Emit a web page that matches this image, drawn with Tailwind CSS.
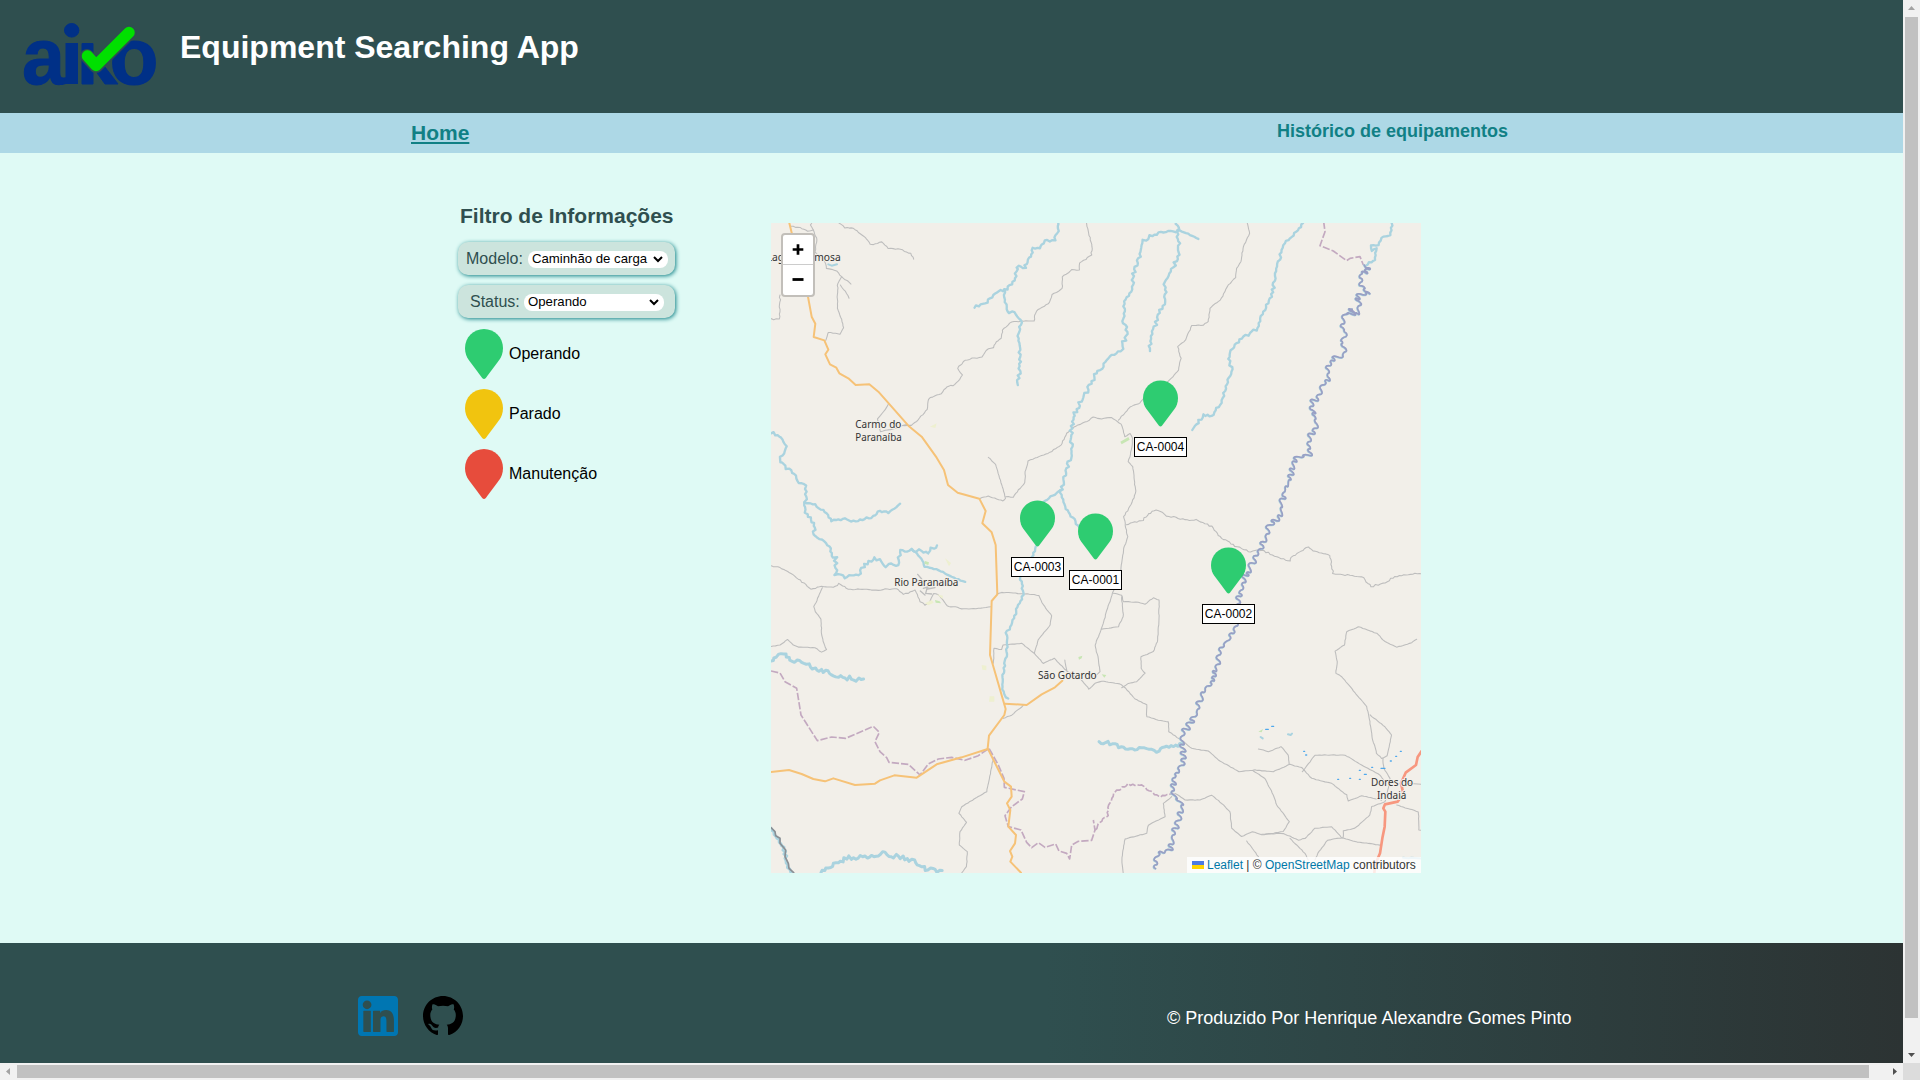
<!DOCTYPE html>
<html lang="pt-BR">
<head>
<meta charset="utf-8">
<title>Equipment Searching App</title>
<script src="https://cdn.jsdelivr.net/npm/@tailwindcss/browser@4"></script>
</head>
<body class="h-[1080px] w-[1920px] overflow-hidden bg-[#f1f1f1] font-['Liberation_Sans',Arial,sans-serif] text-base">
<svg width="0" height="0" class="absolute">
  <symbol id="pin" viewBox="0 0 38 50"><path d="M19 0C8.500 0 0 8.500 0 19c0 5 1.600 8.800 3.600 11.800L17.200 49q1.800 2 3.600 0L34.400 30.800C36.400 27.800 38 24 38 19 38 8.500 29.500 0 19 0z" fill="currentColor"/></symbol>
</svg>
<div class="grid h-full grid-cols-[1903px_17px] grid-rows-[1063px_17px]">
  <div class="flex flex-col overflow-hidden bg-[#dffaf5]">
    <header class="flex h-[113px] shrink-0 items-start bg-[#2f4f4f]">
      <svg class="h-[113px] w-[180px] shrink-0" viewBox="0 0 180 113" font-family="Liberation Sans, Arial, sans-serif" font-weight="bold" font-size="79">
        <g fill="#003087" stroke="#003087" stroke-width="1">
          <text x="22" y="84" textLength="43" lengthAdjust="spacingAndGlyphs">a</text>
          <rect x="66" y="43.500" width="11.500" height="40"/>
          <ellipse cx="71.700" cy="30.300" rx="7.200" ry="6.800"/>
          <path d="M82 43.500H93V84H82zM89 66L98 58 118 84H105L95 70z"/>
          <text x="109.500" y="84" textLength="49" lengthAdjust="spacingAndGlyphs">o</text>
        </g>
        <path d="M87 56L96 66 130 32" fill="none" stroke="#2f4f4f" stroke-width="14" stroke-linecap="round" stroke-linejoin="round"/>
        <path d="M87.500 56L96 65.500 129 32.500" fill="none" stroke="#00e000" stroke-width="11.500" stroke-linecap="round" stroke-linejoin="round"/>
      </svg>
      <h1 class="mt-[29px] text-[32px] leading-[37px] font-bold whitespace-nowrap text-white">Equipment Searching App</h1>
    </header>
    <nav class="flex h-10 shrink-0 bg-[#add8e6] font-bold text-[#118085]">
      <a class="w-[866px] pt-2 pl-[411px] text-[21px] leading-6 underline decoration-2 underline-offset-2">Home</a>
      <a class="pt-2 pl-[411px] text-[18px] leading-5">Histórico de equipamentos</a>
    </nav>
    <main class="flex h-[790px] shrink-0 pl-[458px]">
      <aside class="w-[313px] pt-[51px]">
        <h2 class="pl-0.5 text-[21px] leading-6 font-bold whitespace-nowrap text-[#2f4f4f]">Filtro de Informações</h2>
        <div class="mt-[14px] flex h-[33px] w-[217px] items-center rounded-[10px] bg-[#cce4dd] pl-2 text-[#2f4f4f] shadow-[1px_1px_4px_#118085]">
          <span class="w-[62px] leading-[18px] pt-px">Modelo:</span>
          <span class="mt-px flex h-[17px] w-[140px] items-center justify-between rounded-lg bg-white pr-[5px] pl-1 text-[13.2px] leading-4 text-black">Caminhão de carga<svg width="10" height="7" viewBox="0 0 10 7" fill="none" stroke="#000" stroke-width="2"><path d="M1 1l4 4 4-4"/></svg></span>
        </div>
        <div class="mt-[10px] flex h-[33px] w-[217px] items-center rounded-[10px] bg-[#cce4dd] pl-3 text-[#2f4f4f] shadow-[1px_1px_4px_#118085]">
          <span class="w-[54px] leading-[18px] pt-px">Status:</span>
          <span class="mt-px flex h-[17px] w-[140px] items-center justify-between rounded-lg bg-white pr-[5px] pl-1 text-[13.2px] leading-4 text-black">Operando<svg width="10" height="7" viewBox="0 0 10 7" fill="none" stroke="#000" stroke-width="2"><path d="M1 1l4 4 4-4"/></svg></span>
        </div>
        <ul class="mt-[11px] flex flex-col gap-2.5 pl-[7px]">
          <li class="flex h-[50px] items-center gap-[6px]"><svg class="h-[50px] w-[38px] text-[#2ecc71]"><use href="#pin"/></svg>Operando</li>
          <li class="flex h-[50px] items-center gap-[6px]"><svg class="h-[50px] w-[38px] text-[#f1c40f]"><use href="#pin"/></svg>Parado</li>
          <li class="flex h-[50px] items-center gap-[6px]"><svg class="h-[50px] w-[38px] text-[#e74c3c]"><use href="#pin"/></svg>Manutenção</li>
        </ul>
      </aside>
      <section class="relative mt-[70px] h-[650px] w-[650px] overflow-hidden bg-[#f2efe9]">
        <svg id="map" class="absolute inset-0" width="650" height="650" viewBox="18 24 1950 1950" fill="none" stroke-linejoin="round" stroke-linecap="round">
          <g id="lines"></g>
          <g fill="#c8e6b4">
            <path d="M480 1038l12 4-2 8-12-4zM510 1155l14 4 4 6-16-2zM940 1326l12-4-2 8-8 4zM1066 680l24-14 4 8-24 14zM1010 1378l14 2-6 8zM1480 1550l14-8-4 10z"/>
            <path fill="#eef0d0" d="M495 635l20-10-4 14zM540 1030l18 14-6 10zM650 1350l14 2v14l-12-2zM674 1444h14v16h-16zM480 1165l20-10 6 8-16 8zM516 1138l18 4-2 10z"/>
          </g>
          <path stroke="#bdbdbd" stroke-width="4" d="M458 1078l12 14M475 1120l20-6M490 1105l-8 30 18 2M466 1128l14 12M488 1122l22-4"/>
          <path stroke="#4fa8ec" stroke-width="4" d="M1502 1543h8M1520 1534h6M1616 1609h3M1622 1620h3M1718 1693h3M1754 1690h3M1783 1666h3M1783 1693h3M1798 1678h6M1820 1657h3M1848 1660h12M1876 1638h3M1892 1624h3M1906 1609h3"/>
          <path stroke="#aad3df" stroke-width="6" d="M1487 1566l6 4M1569 1558l8 2 4-4M190 148l10 4 16-4M1914 1928l16 2 10-2 30 3"/>
          <g fill="#333" stroke="#f2efe9" stroke-width="6" paint-order="stroke" font-family="Noto Sans, Open Sans, sans-serif" font-size="30">
            <text x="5" y="138" textLength="222" lengthAdjust="spacingAndGlyphs">Lagoa Formosa</text>
            <text x="271" y="640" textLength="138" lengthAdjust="spacingAndGlyphs">Carmo do</text>
            <text x="271" y="678" textLength="139" lengthAdjust="spacingAndGlyphs">Paranaíba</text>
            <text x="388" y="1114" textLength="192" lengthAdjust="spacingAndGlyphs">Rio Paranaíba</text>
            <text x="819" y="1392" textLength="176" lengthAdjust="spacingAndGlyphs">São Gotardo</text>
            <text x="1818" y="1713" textLength="126" lengthAdjust="spacingAndGlyphs">Dores do</text>
            <text x="1836" y="1751" textLength="88" lengthAdjust="spacingAndGlyphs">Indaiá</text>
          </g>
        </svg>
        <div class="absolute top-[10px] left-[10px] flex h-16 w-[34px] flex-col rounded border-2 border-[#c2bfba] bg-white">
          <svg class="h-[30px] w-[30px] border-b border-[#ccc]" viewBox="0 0 30 30"><path d="M9.500 15h11M15 9.500v11" stroke="#000" stroke-width="2.800"/></svg>
          <svg class="h-[30px] w-[30px]" viewBox="0 0 30 30"><path d="M9.500 14.500h11" stroke="#000" stroke-width="2.800"/></svg>
        </div>
        <div class="absolute top-[157px] left-[363px] flex w-[53px] flex-col items-center"><svg class="h-[47px] w-[35px] text-[#2ecc71]"><use href="#pin"/></svg><span class="mt-[10px] h-5 w-[53px] border border-black bg-white text-center text-xs leading-[18px] whitespace-nowrap">CA-0004</span></div>
        <div class="absolute top-[277px] left-[240px] flex w-[53px] flex-col items-center"><svg class="h-[47px] w-[35px] text-[#2ecc71]"><use href="#pin"/></svg><span class="mt-[10px] h-5 w-[53px] border border-black bg-white text-center text-xs leading-[18px] whitespace-nowrap">CA-0003</span></div>
        <div class="absolute top-[290px] left-[298px] flex w-[53px] flex-col items-center"><svg class="h-[47px] w-[35px] text-[#2ecc71]"><use href="#pin"/></svg><span class="mt-[10px] h-5 w-[53px] border border-black bg-white text-center text-xs leading-[18px] whitespace-nowrap">CA-0001</span></div>
        <div class="absolute top-[324px] left-[431px] flex w-[53px] flex-col items-center"><svg class="h-[47px] w-[35px] text-[#2ecc71]"><use href="#pin"/></svg><span class="mt-[10px] h-5 w-[53px] border border-black bg-white text-center text-xs leading-[18px] whitespace-nowrap">CA-0002</span></div>
        <div class="absolute right-0 bottom-0 flex h-4 w-[234px] items-center bg-white/80 pl-[5px] text-xs whitespace-pre text-[#333]"><svg class="mr-[3px] h-2 w-3" viewBox="0 0 12 8"><path fill="#4c7be1" d="M0 0h12v4H0z"/><path fill="#ffd500" d="M0 4h12v4H0z"/></svg><span class="text-[#0078a8]">Leaflet</span> | © <span class="text-[#0078a8]">OpenStreetMap</span> contributors</div>
      </section>
    </main>
    <footer class="flex h-[120px] shrink-0 items-start bg-[linear-gradient(to_right,#2f4f4f_55%,#2c3333_100%)] pt-[53px] pl-[358px]">
      <svg class="size-10" viewBox="0 0 128 128"><path fill="#0076b2" d="M116 0H12C5 0 0 5 0 12v104c0 7 5 12 12 12h104c7 0 12-5 12-12V12c0-7-5-12-12-12zM41 114q0 1-1 1H19q-2 0-2-2V49q0-2 2-2h21q1 0 1 2zM29 42a14 14 0 1 1 0-28 14 14 0 0 1 0 28zM115 113q0 2-2 2H93q-2 0-2-2V83c0-5 1-18-9-18-9 0-10 8-10 13v35q0 2-1 2H50q-2 0-2-2V49q0-2 2-2h20q1 0 1 2v5c4-6 10-9 19-9 22 0 25 20 25 35z"/></svg>
      <svg class="ml-[25px] size-10" viewBox="0 0 16 16"><path d="M8 0C3.580 0 0 3.580 0 8c0 3.540 2.290 6.530 5.470 7.590.4.070.55-.17.55-.38 0-.19-.01-.82-.01-1.490-2.010.37-2.530-.49-2.690-.94-.09-.23-.48-.94-.82-1.130-.28-.15-.68-.52-.01-.53.63-.01 1.080.58 1.230.82.72 1.210 1.870.87 2.330.66.07-.52.28-.87.51-1.070-1.780-.2-3.640-.89-3.640-3.950 0-.87.31-1.590.82-2.150-.08-.2-.36-1.020.08-2.120 0 0 .67-.21 2.200.82.64-.18 1.320-.27 2-.27s1.360.09 2 .27c1.530-1.040 2.200-.82 2.200-.82.44 1.100.16 1.920.08 2.120.51.56.82 1.270.82 2.150 0 3.070-1.870 3.750-3.650 3.950.29.25.54.73.54 1.480 0 1.070-.01 1.930-.01 2.200 0 .21.15.46.55.38A8.010 8.010 0 0 0 16 8c0-4.420-3.580-8-8-8z"/></svg>
      <p class="mt-[12px] ml-[704px] text-[18px] leading-5 whitespace-nowrap text-white">© Produzido Por Henrique Alexandre Gomes Pinto</p>
    </footer>
  </div>
  <div class="flex flex-col items-center bg-[#f1f1f1]">
    <svg class="size-[17px]" viewBox="0 0 17 17"><path fill="#a3a3a3" d="M5 10h7L8.500 6z"/></svg>
    <div class="h-[1001px] w-[13px] bg-[#c1c1c1]"></div>
    <svg class="mt-auto size-[17px]" viewBox="0 0 17 17"><path fill="#505050" d="M5 7h7l-3.500 4z"/></svg>
  </div>
  <div class="flex items-center bg-[#f1f1f1]">
    <svg class="size-[17px]" viewBox="0 0 17 17"><path fill="#a3a3a3" d="M10 5v7L6 8.500z"/></svg>
    <div class="h-[13px] w-[1852px] bg-[#c1c1c1]"></div>
    <svg class="ml-auto size-[17px]" viewBox="0 0 17 17"><path fill="#505050" d="M7 5v7l4-3.500z"/></svg>
  </div>
  <div class="bg-[#dcdcdc]"></div>
</div>
<script>
// Map features: [kind, x offset, y offset, roughness, points]
const styles = {
  road: ['#bdbdbd', 3.2], river: ['#aad3df', 7], stream: ['#aad3df', 9], main: ['#f6c277', 6], trunk: ['#f7977f', 8],
  border: ['#c3a9c0', 5, '22 6'], big: ['#999fc4', 5]
};
const X = 990, Y = 990;
const features = [
  ['road',0,0,1.5,'78,34 105,38 128,48 145,45 136,30 142,20'],
  ['road',0,0,1.5,'145,45 156,75 150,110 180,140 185,160 215,168 230,185 258,207'],
  ['road',0,0,1.5,'230,185 218,205 217,280 232,320 236,338 225,358 190,352 182,376'],
  ['road',0,0,1,'226,210 245,235 252,250'],
  ['road',0,0,1.5,'222,24 240,38 265,40 302,67 315,88 325,90 350,80 370,100 406,103 437,116 447,132'],
  ['road',0,0,2,'964,20 970,55 981,88 979,120 945,145 943,165 920,165 892,186 892,220 862,240 855,262 820,284 808,300 808,318 790,318 768,318 740,320 712,345 710,370 690,385 686,398 663,405 650,425 600,435 578,460 592,480 570,510 545,515 528,535 490,552 485,583 460,615 440,632 412,631'],
  ['road',0,0,1,'370,568 360,585 338,612 347,650 390,640 425,628'],
  ['road',0,0,1,'670,727 692,748 700,775 722,850 714,858 670,843 645,850'],
  ['road',0,0,1.5,'722,845 745,846 765,820 780,803 780,770 790,738 830,722 855,712 888,690 905,655 925,636 960,622 985,607 1010,611 1040,608 1068,628 1080,665 1095,655 1103,670 1103,690 1090,740 1103,755 1112,835 1095,875 1076,905 1088,965 1077,1000 1070,1050 1060,1100 1040,1140 1010,1240 990,1290 1000,1330 1004,1370 985,1390'],
  ['road',X,0,1.5,'457,24 463,55 445,95 437,140 425,160 422,188 400,210 380,250 345,280 340,320 325,330 290,332 272,375 248,395 258,430 250,465 220,500 150,545 135,565 105,576 70,615'],
  ['road',X,0,3,'94,929 145,915 160,895 190,885 215,902 270,915 310,915 350,935 380,970 420,992 460,1010 500,1006 585,1040 590,1028 640,995 660,1010 705,1020 715,1075 800,1085 828,1115 870,1102 900,1085 980,1075'],
  ['road',0,0,3,'45,240 42,312 18,313'],
  ['road',0,Y,2,'18,62 45,68 68,80 100,102 138,132 170,125 205,128 222,116 250,132 340,135 395,130 415,148 430,145 450,135 465,170 480,180 492,172 505,145 520,148 545,183 590,190 640,191 678,185'],
  ['road',0,Y,1,'172,128 147,185 150,200 168,222 170,270 176,295 184,314 170,322 150,308 100,306 85,300 67,284 45,300 18,304'],
  ['road',0,Y,1,'695,148 710,142 800,148 822,152 835,180 860,212 855,240 820,285 808,325 835,355 868,340 905,378 900,345'],
  ['road',0,Y,1,'685,355 687,310 710,314 714,300 770,295 808,325'],
  ['road',0,Y,1,'905,378 945,400 972,432 990,415 1010,408 1064,416 1082,430 1110,462 1145,480 1145,515 1180,525 1210,530 1212,560 1255,590 1280,610 1330,618 1360,645 1422,680 1470,675 1525,680 1575,658 1610,668 1640,700 1700,715 1745,750 1750,768 1790,752 1850,765'],
  ['road',0,Y,1,'715,520 740,510 775,482'],
  ['road',0,Y,1,'685,640 665,740 590,785 582,805 605,832 585,860 583,900 607,920 605,965 590,983'],
  ['road',X,Y,1,'55,145 80,150 85,170 130,172 150,178 175,158 192,165 192,225 187,290 175,320 138,335 138,370 150,385 125,410 100,415 80,428'],
  ['road',X,Y,1,'80,155 85,215 70,245 20,253'],
  ['road',X,Y,1,'965,283 950,293 905,307 870,290 845,265 790,245 755,260 748,300 720,318 727,350 722,385 740,395 815,485 822,515 832,580 845,625 860,640 876,632 890,570 870,545 825,510'],
  ['road',X,Y,1,'864,640 866,670 885,700 880,730 870,770 830,785 825,810 780,850 745,858 745,878 698,885 668,925 660,945'],
  ['road',X,Y,1,'490,612 520,620 558,605 580,630 582,658'],
  ['road',X,Y,1,'622,680 645,650 660,630 750,630 800,660 855,690 870,710'],
  ['road',X,Y,1,'475,678 510,700 535,750 545,780 583,830 565,860 500,870 472,860 440,875 410,850 405,800 380,775 350,750 315,765 270,765 240,745'],
  ['road',X,Y,1,'500,868 565,865 610,885 630,880 660,850 710,845 740,878 780,890 855,900'],
  ['road',X,Y,1,'585,880 630,925 640,945'],
  ['road',X,Y,1,'455,888 490,935'],
  ['road',X,Y,1,'905,780 970,800 972,855 980,857'],
  ['road',X,Y,1,'230,755 205,775 210,815 160,840 155,865 90,882 80,945 85,983'],
  ['road',X,Y,0,'935,715 980,718'],
  ['river',0,0,5,'878,20 880,40 868,75 840,80 825,100 803,100 800,125 785,140 780,158 755,155 752,190 735,212 720,225 695,230 665,260 628,277'],
  ['river',0,0,6,'720,225 725,290 755,297 767,315 760,370 768,440 758,510'],
  ['river',0,0,7,'18,655 45,660 62,685 55,715 42,740 75,770 95,790 120,815 120,860 115,870 130,905 150,930 145,950 190,998 212,1030 212,1080 240,1088 280,1080 300,1048 330,1030 365,1052 400,1050 405,1005 440,1005 490,1010 515,990'],
  ['river',0,0,4,'118,862 150,870 175,885 200,918 240,912 265,918 325,905 338,890 370,892 395,880 405,866'],
  ['river',0,0,2,'440,1003 465,1025 480,1055 520,1065 560,1085 600,1102'],
  ['river',X,0,7,'244,20 248,45 205,50 165,65 145,78 130,130 118,170 110,215 90,260 85,310 98,350 80,400 45,425 0,480 -25,530 -65,600 -70,640 -70,715 -90,780 -102,830'],
  ['river',X,0,3,'248,45 280,55 310,72'],
  ['river',X,0,6,'248,45 254,105 238,150 210,210 210,260 190,300 175,350 163,408'],
  ['river',X,0,5,'624,24 590,65 570,85 550,140 540,190 530,245 505,290 490,340 440,370 415,395 402,425 410,470 390,520 375,570 350,603 325,600 292,645'],
  ['river',0,0,3,'885,826 835,862 800,920'],
  ['river',0,0,4,'885,826 900,875 935,925 950,960'],
  ['river',0,Y,4,'812,5 800,50 765,90 775,150 755,185 748,220 725,265 725,320 713,390 715,440 727,462'],
  ['stream',0,Y,8,'18,348 35,330 55,325 75,345 110,352 150,372 195,380 220,398 260,400 295,406'],
  ['stream',0,Y,8,'168,983 200,960 245,940 300,935 345,925 400,935 440,945 475,970 530,983'],
  ['stream',0,Y,5,'18,850 45,890 60,920 65,960 82,985'],
  ['stream',X,Y,6,'12,590 45,595 85,610 140,612 185,618 215,605 262,597'],
  ['river',X,0,4,'890,24 885,60 860,70 850,90 828,92 830,108 845,100 840,135 812,150'],
  ['border',X,0,0,'686,20 690,50 675,92 715,108 755,137 765,130 795,125 805,150'],
  ['border',0,Y,0,'18,378 45,384 60,410 95,430 108,510 157,587 200,576 242,580 325,544 343,562 330,590 345,620 365,638 372,652 430,658 465,690 490,657 520,642 560,637 600,646 640,632 672,610 700,660 717,700 718,727 778,740 772,762 740,785 720,812 730,845 768,855 785,892 800,908 820,893 840,907 872,897 882,918 905,925 914,942 920,900 940,889 980,886 990,855 985,825'],
  ['border',X,Y,3,'0,855 15,832 38,810 42,780 60,740 100,718 140,722 190,755 235,745'],
  ['main',0,0,0,'72,20 84,70 128,240 140,305 151,326 146,366 178,376 190,404 181,418 195,448 214,458 223,475 250,490 272,510 313,508 340,530 430,632 470,665 515,728 537,765 549,810 578,833 643,851 662,888 652,925 680,952 692,990 697,1138 680,1158 675,1320 722,1482 718,1500 672,1562 668,1600 718,1700 738,1715 740,1745 726,1765 736,1785 730,1835 753,1860 750,1885 735,1908 742,1925 736,1940 768,1973'],
  ['main',0,Y,0,'719,476 785,480 830,448 870,427 892,407'],
  ['main',0,Y,0,'18,681 72,675 110,687 145,702 180,709 205,700 270,720 330,716 345,706 388,691 455,698 515,658 590,637 668,612'],
  ['trunk',X,Y,0,'980,618 968,636 963,660 932,683 918,715 925,745 908,770 870,778 865,790 871,800 869,845 862,880 855,925 840,960 838,985'],
  ['big',X,0,13,'808,150 825,160 815,172 796,168 800,190 795,210 820,234 800,236 782,240 798,270 788,302 765,280 775,295 745,292 740,330 755,355 740,380 750,412 715,430 700,465 700,500 680,515 675,540 650,560 655,595 665,615 665,640 645,660 645,718 605,725 590,755 585,800 565,830 560,880 545,915 520,930 515,960 500,1000 480,1030 455,1080 440,1110 430,1160 425,1230 395,1275 370,1320 362,1370 345,1420 315,1440 312,1480 290,1520 262,1560 265,1600 262,1640 240,1680 235,1730 262,1775 250,1820 230,1870 225,1900 190,1915 180,1973']
];
let seed = 7;
const rnd = () => (seed = (seed * 16807) % 2147483647) / 2147483647;
function trace(pts, rough) {
  let d = 'M' + pts[0];
  for (let i = 1; i < pts.length; i++) {
    const [x0, y0] = pts[i - 1], [x1, y1] = pts[i];
    const len = Math.hypot(x1 - x0, y1 - y0) || 1;
    const n = rough ? Math.max(1, Math.round(len / 7)) : 1;
    const nx = -(y1 - y0) / len, ny = (x1 - x0) / len;
    for (let k = 1; k <= n; k++) {
      const o = rough ? (rnd() - .5) * 1.7 * rough : 0;
      d += `L${(x0 + (x1 - x0) * k / n + nx * o).toFixed(1)},${(y0 + (y1 - y0) * k / n + ny * o).toFixed(1)}`;
    }
  }
  return d;
}
// Meandering river: irregular rounded bends on alternating sides of the course
function meander(pts, amp) {
  const knots = [pts[0]];
  let side = 1, left = 10;
  for (let i = 1; i < pts.length; i++) {
    const [x0, y0] = pts[i - 1], [x1, y1] = pts[i];
    const len = Math.hypot(x1 - x0, y1 - y0) || 1;
    let t = left;
    while (t < len) {
      side = -side;
      const o = side * amp * (.2 + rnd() * .85), slip = (rnd() - .5) * 7;
      knots.push([x0 + (x1 - x0) * t / len + o, y0 + (y1 - y0) * t / len + slip + o * .3]);
      t += 7 + rnd() * 9;
    }
    left = t - len;
  }
  let d = 'M' + knots[0];
  for (let i = 1; i < knots.length - 1; i++) {
    const [ax, ay] = knots[i], [bx, by] = knots[i + 1];
    d += `C${(ax * .9 + knots[i - 1][0] * .1).toFixed(1)},${(ay - 3).toFixed(1)} ${ax.toFixed(1)},${(ay + 5).toFixed(1)} ${((ax + bx) / 2).toFixed(1)},${((ay + by) / 2).toFixed(1)}`;
  }
  return d;
}
let out = '';
for (const [kind, dx, dy, rough, s] of features) {
  const pts = s.split(' ').map(p => p.split(',').map(Number)).map(([x, y]) => [x + dx, y + dy]);
  const [c, w, dash] = styles[kind], d = kind === 'big' ? meander(pts, rough) : trace(pts, rough);
  if (kind === 'big') out += `<path d="${d}" stroke="#aad3df" stroke-width="6" transform="translate(-1 1)"/>`;
  out += `<path d="${d}" stroke="${c}" stroke-width="${w}"${dash ? ` stroke-dasharray="${dash}" stroke-linecap="butt"` : ''}/>`;
}
out += '<path d="M18,1838L30,1850 32,1862 45,1870 45,1885 62,1905 60,1925 70,1945 72,1960 86,1973" stroke="#8a8f94" stroke-width="5"/>';
document.getElementById('lines').innerHTML = out;
</script>
</body>
</html>
